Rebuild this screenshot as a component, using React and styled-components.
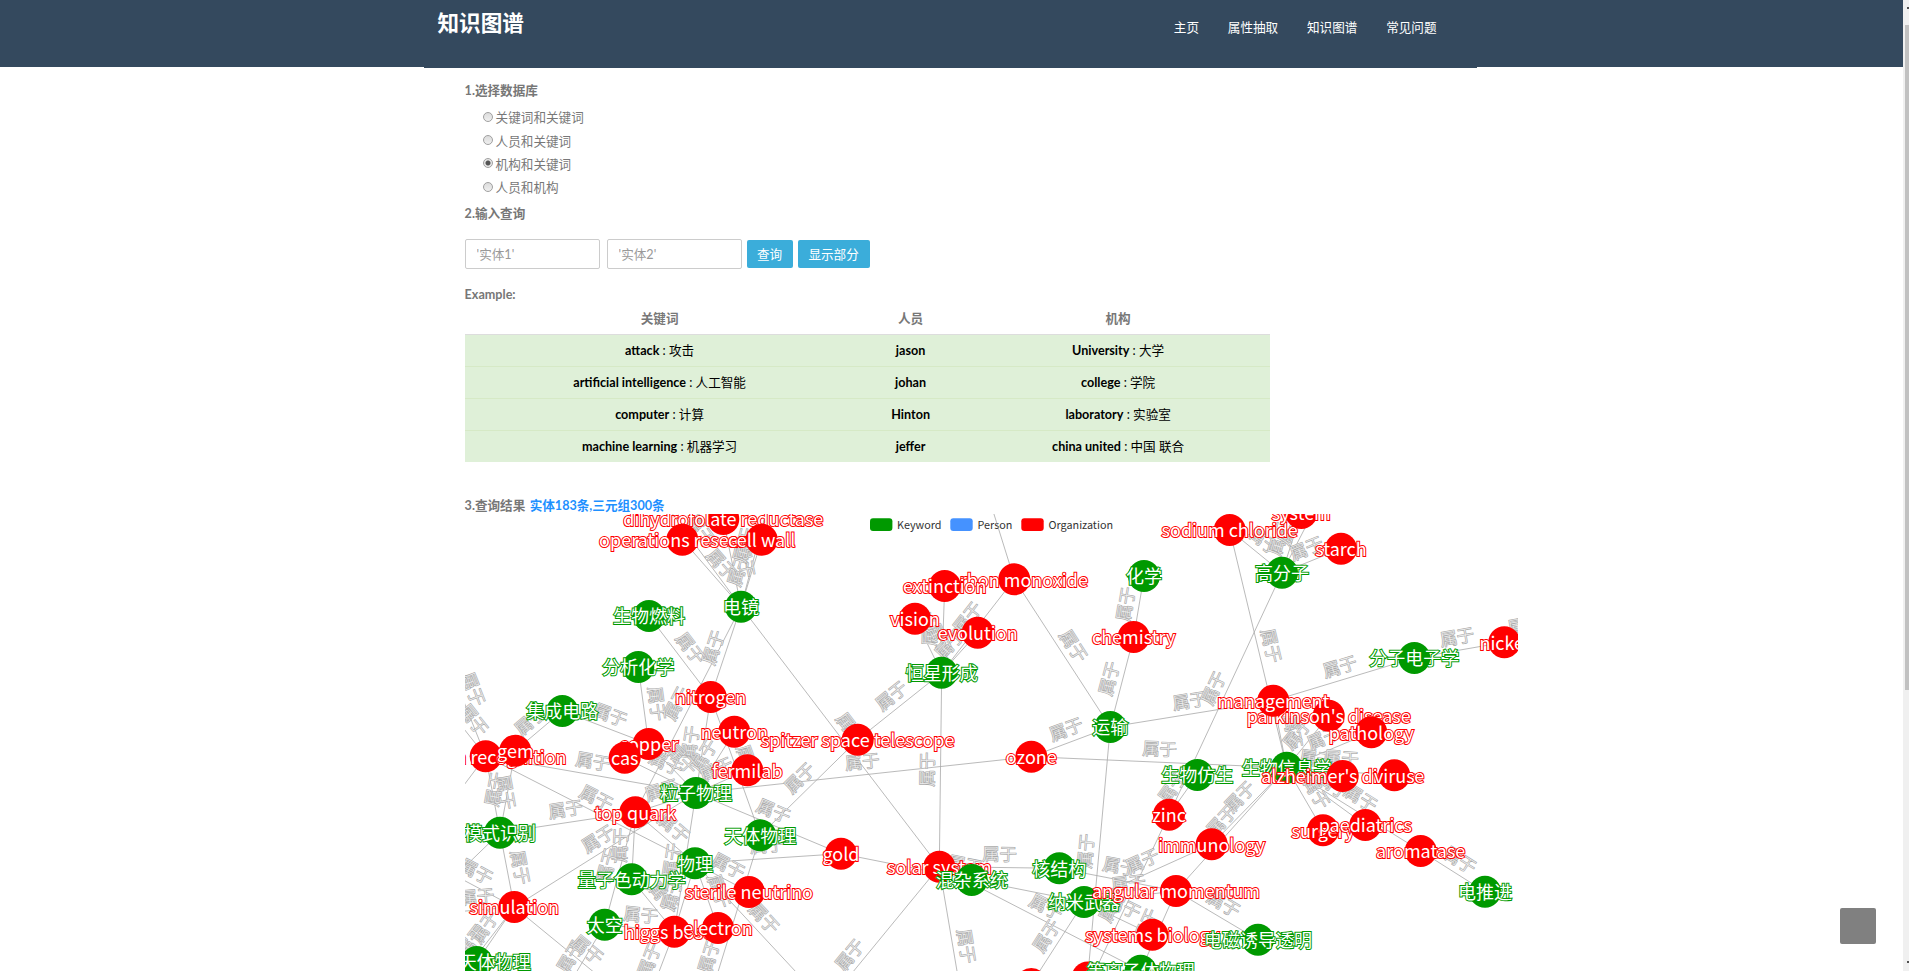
import React from 'react';
import styled, { createGlobalStyle } from 'styled-components';

const GlobalStyle = createGlobalStyle`
  *, *::before, *::after { box-sizing: border-box; }
  html, body { margin: 0; padding: 0; height: 100%; overflow: hidden; background: #fff; }
  body {
    font-family: Lato, "Noto Sans CJK SC", sans-serif;
    font-size: 12.6px;
    line-height: 18px;
    color: #777;
  }
`;

const Screen = styled.div`
  display: flex;
  height: 971px;
  overflow: hidden;
`;

const Page = styled.div`
  flex: 1;
  min-width: 0;
  height: 971px;
  overflow: hidden;
`;

const Header = styled.header`
  height: 67px;
  padding-left: 424px;
  background: #34495e;
`;

const HeaderInner = styled.div`
  width: 1053px;
  height: 68px;
  display: flex;
  justify-content: space-between;
  align-items: flex-start;
  padding: 0 40.5px 0 13.5px;
  background: #34495e;
  color: #fff;
`;

const Brand = styled.h1`
  margin: 7px 0 0;
  font-size: 21.6px;
  line-height: 32px;
  font-weight: 700;
`;

const Nav = styled.nav`
  display: flex;
  gap: 28.8px;
  margin-top: 19px;
`;

const NavLink = styled.a`
  color: #fff;
  line-height: 18px;
`;

const Main = styled.main`
  padding: 15px 0 0 464.6px;
`;

const SectionTitle = styled.h2`
  margin: ${(p) => p.$margin || '0'};
  font-size: 12.6px;
  line-height: 18px;
  font-weight: 700;
  color: #777;
`;

const Count = styled.span`
  margin-left: 4.4px;
  color: #1e90ff;
`;

const RadioList = styled.div`
  display: flex;
  flex-direction: column;
  margin-top: 6.8px;
  padding-left: 18px;
`;

const RadioRow = styled.label`
  display: flex;
  align-items: center;
  gap: 3px;
  height: 23.3px;
`;

const RadioDot = styled.span`
  width: 10px;
  height: 10px;
  margin-bottom: 3.5px;
  border: 1px solid #a0a0a0;
  border-radius: 50%;
  background: ${(p) =>
    p.$checked
      ? 'radial-gradient(circle, #555 0 2px, #e6e6e6 3px)'
      : 'linear-gradient(#dcdcdc, #efefef)'};
`;

const Form = styled.div`
  display: flex;
  align-items: center;
  margin-top: 16px;
  height: 30px;
`;

const Field = styled.input`
  width: 135px;
  height: 30px;
  margin-right: ${(p) => p.$gap};
  padding: 1px 11px 0;
  border: 1px solid #ccc;
  border-radius: 2px;
  font: inherit;
  &::placeholder { color: #999; opacity: 1; }
`;

const Button = styled.button`
  width: ${(p) => p.$width};
  height: 28px;
  margin-right: 5px;
  padding: 2px 0 0;
  border: 0;
  border-radius: 2px;
  background: #3badda;
  color: #fff;
  font: inherit;
`;

const Table = styled.table`
  width: 805px;
  table-layout: fixed;
  border-collapse: collapse;
  text-align: center;
`;

const HeadCell = styled.th`
  width: ${(p) => p.$width};
  height: 31px;
  padding: 0;
  font-weight: 700;
`;

const Cell = styled.td`
  height: ${(p) => (p.$last ? '31px' : '32px')};
  padding: ${(p) => (p.$last ? '0' : '1px 0 0')};
  border-top: 1px solid ${(p) => (p.$first ? '#ddd' : '#d6e9c6')};
  background: #dff0d8;
  color: #000;
`;

const Graph = styled.div`
  width: 1053px;
  height: 600px;
  overflow: hidden;
  svg { display: block; }
`;

const Scrollbar = styled.div`
  width: 6px;
  padding: 25px 0 0 2px;
  background: #f0f0f0;
  position: relative;
`;

const Thumb = styled.div`
  height: 665px;
  background: #c1c1c1;
`;

const Arrow = styled.span`
  position: absolute;
  right: 0;
  ${(p) => (p.$up ? 'top: 7px' : 'bottom: 8px')};
  width: 2px;
  height: 2px;
  background: #505050;
`;

const ToTop = styled.div`
  position: absolute;
  left: 1840px;
  top: 908px;
  width: 36px;
  height: 36px;
  border-radius: 2px;
  background: #808080;
`;

const GREEN = '#009900';
const RED = '#ff0000';
const GRAPH_FONT = '"Noto Sans CJK SC", sans-serif';

// id, label, type (k = keyword, o = organization), x, y; later entries are drawn on top
const nodes = [
  ['dihydro', 'dihydrofolate reductase', 'o', 723.3, 519],
  ['ops', 'operations research', 'o', 682.3, 539.7],
  ['cell', 'cell wall', 'o', 761.7, 539.7],
  ['em', '电镜', 'k', 741, 606.7],
  ['fuel', '生物燃料', 'k', 649, 616],
  ['anchem', '分析化学', 'k', 638.3, 667],
  ['ic', '集成电路', 'k', 562.3, 711],
  ['nitrogen', 'nitrogen', 'o', 710.7, 697],
  ['neutron', 'neutron', 'o', 734.3, 731.7],
  ['copper', 'copper', 'o', 648.7, 744],
  ['cas', 'cas', 'o', 624.7, 757.7],
  ['pattern', 'pattern recognition', 'o', 485.7, 756.3],
  ['gem', 'gem', 'o', 515.3, 750.7],
  ['fermilab', 'fermilab', 'o', 747.3, 770.3],
  ['particle', '粒子物理', 'k', 696, 793],
  ['top', 'top quark', 'o', 635.3, 812.3],
  ['patrec', '模式识别', 'k', 500, 832.7],
  ['astro', '天体物理', 'k', 760.3, 835.3],
  ['sterile', 'sterile neutrino', 'o', 749, 892],
  ['qcd', '量子色动力学', 'k', 631.7, 879.3],
  ['physics', '物理', 'k', 695, 863.3],
  ['sim', 'simulation', 'o', 514.3, 907],
  ['space', '太空', 'k', 604.7, 924.7],
  ['higgs', 'higgs boson', 'o', 674.3, 931.7],
  ['electron', 'electron', 'o', 718, 928],
  ['pastro', '粒子天体物理', 'k', 476.7, 962],
  ['carbon', 'carbon monoxide', 'o', 1014.3, 579.3],
  ['extinction', 'extinction', 'o', 944.7, 586],
  ['vision', 'vision', 'o', 915, 618.7],
  ['evolution', 'evolution', 'o', 977.7, 632.7],
  ['star', '恒星形成', 'k', 941.7, 672.7],
  ['chem', '化学', 'k', 1144, 576],
  ['chemistry', 'chemistry', 'o', 1133.7, 637],
  ['transport', '运输', 'k', 1110.3, 727],
  ['spitzer', 'spitzer space telescope', 'o', 857.7, 739.7],
  ['ozone', 'ozone', 'o', 1031.3, 756.7],
  ['gold', 'gold', 'o', 841, 853.7],
  ['solar', 'solar system', 'o', 939.3, 866.7],
  ['hybrid', '混杂系统', 'k', 971.7, 880],
  ['nuclear', '核结构', 'k', 1059.3, 868.3],
  ['nano', '纳米武器', 'k', 1084, 902],
  ['sysbio', 'systems biology', 'o', 1152.3, 934.7],
  ['r1', '', 'o', 1031.3, 984],
  ['r2', '', 'o', 1087.7, 977.5],
  ['plasma', '等离子体物理', 'k', 1140.7, 970.7],
  ['sodium', 'sodium chloride', 'o', 1229.7, 530],
  ['system', 'system', 'o', 1301.3, 513],
  ['starch', 'starch', 'o', 1341, 548.7],
  ['polymer', '高分子', 'k', 1282, 572.7],
  ['molel', '分子电子学', 'k', 1414.3, 658],
  ['nickel', 'nickel', 'o', 1504.3, 642.3],
  ['parkinson', "parkinson's disease", 'o', 1328.7, 715.7],
  ['management', 'management', 'o', 1273.3, 700.7],
  ['pathology', 'pathology', 'o', 1371.3, 732.3],
  ['bioinf', '生物信息学', 'k', 1286.7, 767.7],
  ['alz', "alzheimer's disease", 'o', 1342.7, 776],
  ['virus', 'virus', 'o', 1394.3, 775.3],
  ['bionic', '生物仿生', 'k', 1197.3, 775],
  ['zinc', 'zinc', 'o', 1169, 814.7],
  ['immun', 'immunology', 'o', 1211.7, 844.3],
  ['surgery', 'surgery', 'o', 1323, 830.3],
  ['paed', 'paediatrics', 'o', 1365.3, 825],
  ['aromatase', 'aromatase', 'o', 1420.7, 851],
  ['angular', 'angular momentum', 'o', 1176, 891],
  ['epro', '电推进', 'k', 1485, 891.7],
  ['eit', '电磁诱导透明', 'k', 1258, 939.7],
];

// Each end is a node id or the coordinates of a node outside the visible area
const edges = [
  ['em', 'ops'], ['em', 'dihydro'], ['em', 'cell'], ['em', [640, 470]], ['em', [772, 490]],
  ['em', 'nitrogen'], ['em', 'top'], ['em', 'solar'], ['fuel', 'nitrogen'], ['anchem', 'copper'],
  ['ic', 'copper'], ['ic', 'gem'], ['particle', 'nitrogen'], ['astro', 'nitrogen'],
  ['particle', 'neutron'], ['particle', 'copper'], ['particle', 'cas'], ['particle', 'pattern'],
  ['physics', 'pattern'], ['patrec', 'pattern'], ['patrec', 'gem'], ['patrec', 'top'],
  ['patrec', 'sim'], ['particle', 'sim'], ['particle', 'top'], ['particle', 'fermilab'],
  ['particle', 'higgs'], ['particle', 'gold'], ['particle', 'ozone'], ['top', 'qcd'],
  ['top', 'space'], ['top', 'physics'], ['qcd', 'higgs'], ['physics', 'higgs'],
  ['physics', 'electron'], ['physics', 'sterile'], ['physics', 'gold'], ['physics', [813.7, 991]],
  ['astro', 'spitzer'], ['astro', [683, 1085]], ['space', 'higgs'],
  ['space', [558.7, 1002]], ['sim', [643.7, 1013]], ['sim', 'pastro'], ['sim', [425.7, 860]],
  ['sim', [442, 913]], ['sim', [450, 990]], ['higgs', [649, 998]], ['pattern', [436, 632]],
  ['pattern', [441, 700]], ['pattern', [430, 830]], ['patrec', [420, 910]],
  ['star', 'carbon'], ['star', 'extinction'], ['star', 'vision'], ['star', 'evolution'],
  ['star', 'spitzer'], ['star', 'solar'], ['carbon', [935, 325]], ['carbon', 'transport'],
  ['chem', 'chemistry'], ['chemistry', 'transport'], ['transport', 'ozone'],
  ['transport', 'management'], ['transport', 'r2'], ['ozone', 'bioinf'], ['gold', 'nano'],
  ['solar', 'nuclear'], ['solar', 'plasma'], ['solar', [780.7, 1060]], ['solar', [967, 1030]],
  ['nuclear', 'angular'], ['nano', 'angular'], ['nano', 'sysbio'], ['nano', 'immun'],
  ['nano', 'r1'], ['angular', 'plasma'], ['zinc', [1078, 1007]], ['polymer', 'sodium'],
  ['polymer', 'system'], ['polymer', 'starch'], ['polymer', [1322, 495]], ['polymer', 'zinc'],
  ['bioinf', 'sodium'], ['molel', 'management'], ['molel', 'nickel'], ['bioinf', 'management'],
  ['bioinf', 'parkinson'], ['bioinf', 'pathology'], ['bioinf', 'alz'], ['bioinf', 'virus'],
  ['bioinf', 'surgery'], ['bioinf', 'paed'], ['bioinf', 'aromatase'], ['bioinf', 'immun'],
  ['bioinf', 'angular'], ['bionic', 'zinc'], ['epro', 'aromatase'], ['angular', 'eit'],
  ['nickel', [1550, 634]],
];

const positions = Object.fromEntries(nodes.map(([id, , , x, y]) => [id, [x, y]]));
const at = (end) => (Array.isArray(end) ? end : positions[end]);

function edgeGeometry([from, to]) {
  const a = at(from);
  const b = at(to);
  const [l, r] = a[0] <= b[0] ? [a, b] : [b, a];
  return {
    l,
    r,
    mx: (l[0] + r[0]) / 2,
    my: (l[1] + r[1]) / 2,
    angle: (Math.atan2(r[1] - l[1], r[0] - l[0]) * 180) / Math.PI,
  };
}

const EdgeLine = styled.line`
  stroke: #aaa;
  stroke-width: 1px;
  opacity: 0.8;
`;

const NodeLabel = styled.text`
  font-family: ${GRAPH_FONT};
  font-size: 18px;
  fill: #fff;
  stroke: ${(p) => p.$color};
  stroke-width: 2px;
  stroke-linejoin: miter;
  stroke-miterlimit: 2;
  paint-order: stroke;
  text-anchor: middle;
`;

const EdgeLabel = styled.text`
  font-family: ${GRAPH_FONT};
  font-size: 17.2px;
  font-weight: 300;
  fill: #eee;
  stroke: #aaa;
  stroke-width: 1.3px;
  stroke-miterlimit: 2;
  paint-order: stroke;
  text-anchor: middle;
`;

const LegendText = styled.text`
  font-family: ${GRAPH_FONT};
  font-size: 10.8px;
  fill: #333;
`;

const legend = [
  ['Keyword', GREEN, 870, 897],
  ['Person', '#4592ff', 950.3, 977.5],
  ['Organization', RED, 1021.3, 1048.5],
];

function KnowledgeGraph() {
  const geo = edges.map(edgeGeometry);
  return (
    <Graph>
      <svg width="1053" height="600" viewBox="465 514 1053 600">
        {legend.map(([name, color, sx, tx]) => (
          <g key={name}>
            <rect x={sx} y="518.3" width="22.4" height="12.6" rx="3" fill={color} />
            <LegendText x={tx} y="529">{name}</LegendText>
          </g>
        ))}
        {geo.map((e, i) => (
          <EdgeLine key={i} x1={e.l[0]} y1={e.l[1]} x2={e.r[0]} y2={e.r[1]} />
        ))}
        {geo.map((e, i) => (
          <EdgeLabel
            key={i}
            y="-7"
            transform={`translate(${e.mx} ${e.my}) rotate(${e.angle})`}
          >
            属于
          </EdgeLabel>
        ))}
        {nodes.map(([id, label, type, x, y]) => {
          const color = type === 'k' ? GREEN : RED;
          return (
            <g key={id}>
              <circle cx={x} cy={y} r="16" fill={color} />
              <NodeLabel $color={color} x={x} y={y + 7.3}>{label}</NodeLabel>
            </g>
          );
        })}
      </svg>
    </Graph>
  );
}

const databases = ['关键词和关键词', '人员和关键词', '机构和关键词', '人员和机构'];

const examples = [
  [['attack', '攻击'], 'jason', ['University', '大学']],
  [['artificial intelligence', '人工智能'], 'johan', ['college', '学院']],
  [['computer', '计算'], 'Hinton', ['laboratory', '实验室']],
  [['machine learning', '机器学习'], 'jeffer', ['china united', '中国 联合']],
];

export default function App() {
  return (
    <Screen>
      <GlobalStyle />
      <Page>
        <Header>
          <HeaderInner>
            <Brand>知识图谱</Brand>
            <Nav>
              {['主页', '属性抽取', '知识图谱', '常见问题'].map((item) => (
                <NavLink key={item}>{item}</NavLink>
              ))}
            </Nav>
          </HeaderInner>
        </Header>
        <Main>
          <SectionTitle>1.选择数据库</SectionTitle>
          <RadioList>
            {databases.map((name, i) => (
              <RadioRow key={name}>
                <RadioDot $checked={i === 2} />
                {name}
              </RadioRow>
            ))}
          </RadioList>
          <SectionTitle $margin="5px 0 0">2.输入查询</SectionTitle>
          <Form>
            <Field placeholder="'实体1'" $gap="7px" />
            <Field placeholder="'实体2'" $gap="5px" />
            <Button $width="46px">查询</Button>
            <Button $width="72px">显示部分</Button>
          </Form>
          <SectionTitle $margin="17px 0 0">Example:</SectionTitle>
          <Table>
            <thead>
              <tr>
                <HeadCell $width="390px">关键词</HeadCell>
                <HeadCell $width="112px">人员</HeadCell>
                <HeadCell $width="303px">机构</HeadCell>
              </tr>
            </thead>
            <tbody>
              {examples.map(([keyword, person, org], i) => {
                const edge = { $first: i === 0, $last: i === examples.length - 1 };
                return (
                  <tr key={person}>
                    <Cell {...edge}><b>{keyword[0]}</b> : {keyword[1]}</Cell>
                    <Cell {...edge}><b>{person}</b></Cell>
                    <Cell {...edge}><b>{org[0]}</b> : {org[1]}</Cell>
                  </tr>
                );
              })}
            </tbody>
          </Table>
          <SectionTitle $margin="35px 0 -1px">
            3.查询结果<Count>实体183条,三元组300条</Count>
          </SectionTitle>
          <KnowledgeGraph />
        </Main>
      </Page>
      <Scrollbar>
        <Thumb />
        <Arrow $up />
        <Arrow />
      </Scrollbar>
      <ToTop />
    </Screen>
  );
}
